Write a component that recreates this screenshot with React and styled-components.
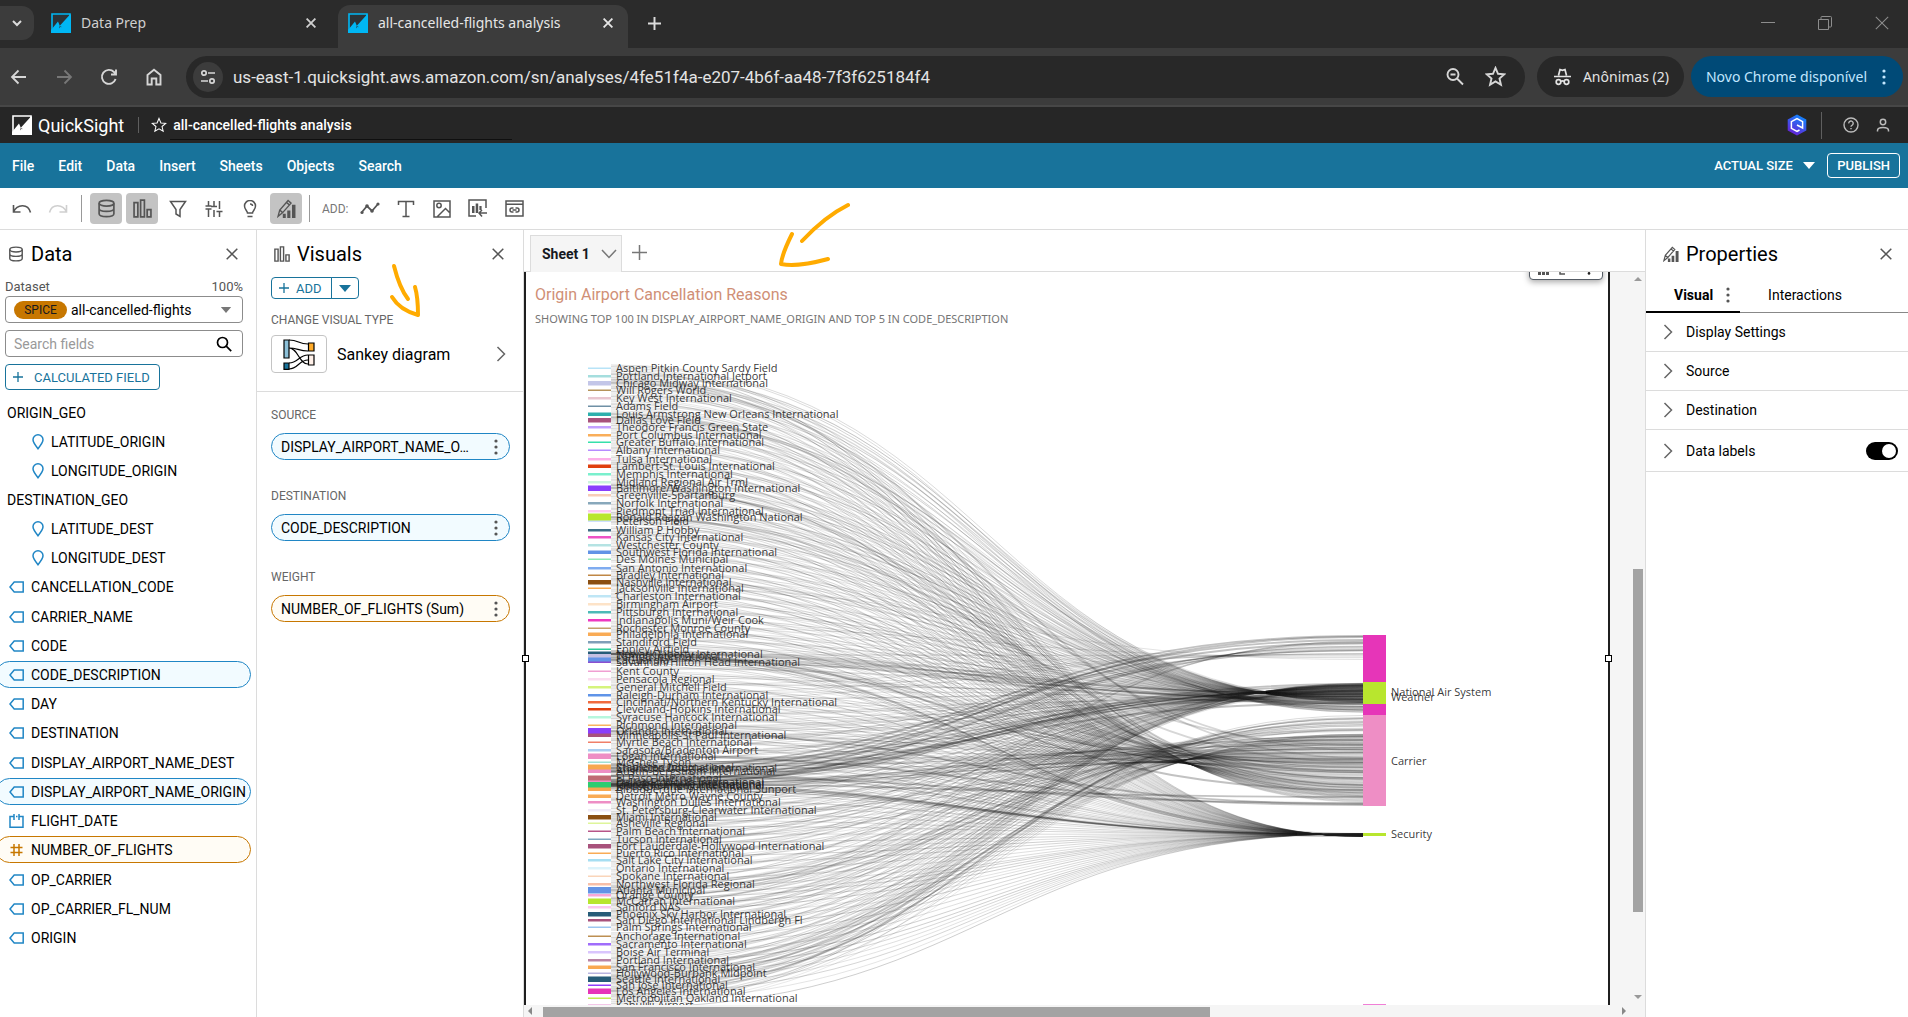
import React from "react";
import styled, { createGlobalStyle, css } from "styled-components";

const appFont = `Roboto, "Open Sans", sans-serif`;
const chromeFont = `"Noto Sans", "Open Sans", sans-serif`;
const chartFont = `"Open Sans", "Noto Sans", sans-serif`;

const GlobalStyle = createGlobalStyle`
  *, *::before, *::after { box-sizing: border-box; }
  body { margin: 0; overflow: hidden; background: #fff; }
  button, input, select { font: inherit; color: inherit; }
  button { background: none; border: 0; padding: 0; cursor: pointer; }
  svg { display: block; flex: none; }
`;

const Page = styled.div`
  display: flex;
  flex-direction: column;
  height: 100vh;
  position: relative;
  font-family: ${appFont};
  font-size: 14px;
  color: #16191f;
`;

/* ---------- browser chrome ---------- */

const TabStrip = styled.div`
  display: flex;
  align-items: flex-start;
  height: 48px;
  background: #2b2b2b;
  color: #dcdcdc;
  font-family: ${chromeFont};
`;

const TabSearch = styled.button`
  display: grid;
  place-items: center;
  width: 34px;
  height: 34px;
  margin-top: 6px;
  background: #3c3c3c;
  border-radius: 0 12px 12px 0;
`;

const BrowserTab = styled.div`
  display: flex;
  align-items: center;
  gap: 10px;
  height: 43px;
  margin-top: 5px;
  padding: ${(p) => (p.$active ? "0 15px 7px 10px" : "0 22px 7px 17px")};
  width: ${(p) => (p.$active ? 290 : 304)}px;
  background: ${(p) => (p.$active ? "#3c3c3c" : "transparent")};
  color: ${(p) => (p.$active ? "#e6e6e6" : "#cfcfcf")};
  border-radius: 12px 12px 0 0;
`;

const TabTitle = styled.span`
  flex: 1;
  white-space: nowrap;
  line-height: 20px;
`;

const NewTab = styled.button`
  display: grid;
  place-items: center;
  width: 34px;
  height: 34px;
  margin: 6px 0 0 9px;
`;

const WindowControls = styled.div`
  display: flex;
  gap: 43px;
  margin: 16px 19px 0 auto;
  color: #8d8d8d;
`;

const AddressBar = styled.div`
  display: flex;
  align-items: center;
  height: 59px;
  padding-right: 5px;
  background: #3c3c3c;
  border-bottom: 2px solid #474747;
  color: #d6d6d6;
  font-family: ${chromeFont};
`;

const NavButtons = styled.div`
  display: flex;
  gap: 23px;
  padding: 0 21px 0 8px;
`;

const UrlBox = styled.div`
  display: flex;
  align-items: center;
  flex: 1;
  height: 42px;
  padding: 0 19px 0 7px;
  background: #282828;
  border-radius: 21px;
`;

const SiteInfo = styled.button`
  display: grid;
  place-items: center;
  width: 30px;
  height: 30px;
  border-radius: 50%;
  background: #3c3c3c;
`;

const UrlInput = styled.input`
  flex: 1;
  min-width: 0;
  border: 0;
  outline: 0;
  padding: 0 10px;
  background: transparent;
  color: #e3e3e3;
  font-family: ${appFont};
  font-size: 17px;
`;

const UrlActions = styled.div`
  display: flex;
  gap: 20px;
`;

const ChromePill = styled.button`
  display: flex;
  align-items: center;
  height: 41px;
  border-radius: 21px;
  background: ${(p) => (p.$accent ? "#004a77" : "#282828")};
  color: ${(p) => (p.$accent ? "#c2e7ff" : "#e3e3e3")};
  margin-left: ${(p) => (p.$accent ? 7 : 12)}px;
  padding: ${(p) => (p.$accent ? "0 17px 0 15px" : "0 15px 0 16px")};
  gap: ${(p) => (p.$accent ? 15 : 11)}px;
  white-space: nowrap;
`;

/* ---------- application header ---------- */

const Header = styled.header`
  display: flex;
  align-items: center;
  height: 36px;
  padding: 0 18px 0 12px;
  background: #262626;
  color: #fff;
`;

const Brand = styled.span`
  margin-left: 6px;
  font-size: 18px;
`;

const HeaderRule = styled.span`
  width: 1px;
  height: ${(p) => p.$h}px;
  margin: ${(p) => p.$m};
  background: #5f5f5f;
`;

const HeaderIcons = styled.div`
  display: flex;
  align-items: center;
  gap: 17px;
  color: #bbb;
`;

const NameInput = styled.input`
  width: 342px;
  height: 25px;
  margin: 5px auto 0 3px;
  padding: 0 3px 5px;
  border: 0;
  border-bottom: 1px solid #0f0f0f;
  background: transparent;
  font-weight: 500;
  outline: 0;
`;

const MenuBar = styled.nav`
  display: flex;
  align-items: center;
  height: 45px;
  padding: 0 8px 0 12px;
  background: #18739b;
  color: #fff;
  font-weight: 500;
`;

const MenuItems = styled.div`
  display: flex;
  gap: 24px;
  margin-right: auto;
`;

const SizePicker = styled.label`
  display: flex;
  align-items: center;
  gap: 10px;
  font-size: 13px;
  margin-right: 12px;
  select {
    appearance: none;
    border: 0;
    padding: 0;
    background: transparent;
    outline: 0;
  }
`;

const Publish = styled.button`
  height: 25px;
  padding: 0 9px;
  border: 1px solid #fff;
  border-radius: 4px;
  font-size: 13px;
  font-weight: 500;
`;

const ToolBar = styled.div`
  display: flex;
  align-items: center;
  gap: 4px;
  height: 42px;
  padding: 0 6px;
  border-bottom: 1px solid #dcdcdc;
  color: #545b64;
`;

const Tool = styled.button`
  display: grid;
  place-items: center;
  width: 32px;
  height: 31px;
  border-radius: 4px;
  background: ${(p) => (p.$on ? "#c3c3c3" : "transparent")};
  color: ${(p) => (p.$faint ? "#cfcfcf" : "#555")};
`;

const ToolRule = styled.span`
  width: 1px;
  height: 27px;
  margin: 0 ${(p) => (p.$tight ? 2 : 4)}px 0 3px;
  background: #999;
`;

const AddLabel = styled.span`
  width: 28px;
  margin-left: 6px;
  font-size: 12px;
  color: #777;
`;

/* ---------- panels ---------- */

const Work = styled.div`
  display: flex;
  flex: 1;
  min-height: 0;
`;

const Panel = styled.section`
  flex: none;
  width: ${(p) => p.$w}px;
  border-${(p) => p.$edge}: 1px solid #dcdcdc;
  overflow: hidden;
`;

const PanelHead = styled.div`
  display: flex;
  align-items: center;
  gap: 7px;
  height: 47px;
  padding: ${(p) => p.$pad};
  color: #555;
  h2 {
    flex: 1;
    margin: 0;
    font-size: 20px;
    font-weight: 400;
    color: #000;
    line-height: 24px;
  }
`;

const DataControls = styled.div`
  display: flex;
  flex-direction: column;
  gap: 7px;
  width: 238px;
  margin-left: 5px;
`;

const DatasetLabel = styled.div`
  display: flex;
  justify-content: space-between;
  height: 12px;
  line-height: 20px;
  color: #555;
  font-size: 13px;
`;

const Box = styled.div`
  display: flex;
  align-items: center;
  height: 27px;
  padding: 0 10px 0 8px;
  border: 1px solid #8c8c8c;
  border-radius: 4px;
  select,
  input {
    flex: 1;
    min-width: 0;
    appearance: none;
    border: 0;
    outline: 0;
    padding: 0;
    background: transparent;
    color: #000;
  }
  input::placeholder {
    color: #999;
    opacity: 1;
  }
`;

const Spice = styled.span`
  width: 53px;
  height: 18px;
  margin-right: 4px;
  border-radius: 9px;
  background: #c77700;
  color: #16191f;
  font-size: 12px;
  line-height: 18px;
  text-align: center;
`;

const Outline = styled.button`
  display: flex;
  align-items: center;
  align-self: flex-start;
  gap: ${(p) => p.$gap}px;
  height: ${(p) => p.$h}px;
  padding: 0 9px 0 7px;
  border: 1px solid #18739b;
  border-radius: ${(p) => p.$r || "4px"};
  color: #18739b;
  font-size: 13px;
  white-space: nowrap;
`;

const Fields = styled.ul`
  display: flex;
  flex-direction: column;
  gap: 2px;
  margin: 0;
  padding: 9px 0 0;
  list-style: none;
  color: #000;
`;

const tones = {
  blue: css`
    border-color: #2086c5;
    background: #f2fbff;
  `,
  orange: css`
    border-color: #c77700;
    background: #fffcf5;
  `,
};

const FieldRow = styled.li`
  display: flex;
  align-items: center;
  gap: 7px;
  height: 27px;
  margin: 0 5px ${(p) => (p.$end ? 1 : 0)}px -4px;
  padding-left: ${(p) => p.$pad}px;
  border: 1px solid transparent;
  border-radius: 14px;
  white-space: nowrap;
  color: #000;
  ${(p) => tones[p.$tone]}
`;

const VisualTop = styled.div`
  padding: 0 14px 18px;
  border-bottom: 1px solid #dcdcdc;
  h3 {
    margin-top: 13px;
  }
`;

const SplitButton = styled.div`
  display: flex;
  button + button {
    margin-left: -1px;
    padding: 0 7px;
  }
`;

const SectionLabel = styled.h3`
  margin: 0;
  font-size: 12px;
  line-height: 16px;
  font-weight: 400;
  color: #666;
`;

const VisualType = styled.button`
  display: flex;
  align-items: center;
  width: 100%;
  margin-top: 7px;
  padding-right: 3px;
  font-size: 16px;
  color: #000;
  text-align: left;
  span {
    flex: 1;
    margin-left: 10px;
  }
`;

const Thumb = styled.i`
  display: grid;
  place-items: center;
  width: 56px;
  height: 38px;
  border: 1px solid #c4c4c4;
  border-radius: 4px;
`;

const Wells = styled.div`
  display: flex;
  flex-direction: column;
  gap: 28px;
  padding: 15px 13px 0 14px;
`;

const WellPill = styled.button`
  display: flex;
  align-items: center;
  justify-content: space-between;
  width: 100%;
  height: 27px;
  margin-top: 10px;
  padding: 0 11px 0 9px;
  border: 1px solid;
  border-radius: 14px;
  ${(p) => tones[p.$tone]}
  span {
    color: #000;
  }
  svg {
    color: #555;
  }
`;

const PropTabs = styled.div`
  display: flex;
  height: 36px;
  border-bottom: 1px solid #888;
`;

const PropTab = styled.button`
  display: flex;
  align-items: center;
  gap: 13px;
  height: 36px;
  padding: 2px 10px 0 28px;
  border-bottom: 2px solid ${(p) => (p.$on ? "#000" : "transparent")};
  font-weight: ${(p) => (p.$on ? 700 : 400)};
  color: #000;
  svg {
    color: #555;
  }
`;

const PropRow = styled.div`
  display: flex;
  align-items: center;
  min-height: ${(p) => (p.$tall ? 42 : 39)}px;
  padding: 0 10px 0 17px;
  border-bottom: 1px solid #dcdcdc;
  button {
    display: flex;
    align-items: center;
    gap: 13px;
    flex: 1;
    color: #000;
  }
`;

const Toggle = styled.input`
  appearance: none;
  width: 32px;
  height: 18px;
  margin: 0;
  padding: 2px;
  border-radius: 9px;
  background: #000;
  &::before {
    content: "";
    display: block;
    width: 14px;
    height: 14px;
    margin-left: auto;
    border-radius: 50%;
    background: #fff;
  }
`;

/* ---------- sheet ---------- */

const Center = styled.main`
  display: flex;
  flex-direction: column;
  flex: 1;
  min-width: 0;
`;

const SheetTabs = styled.div`
  display: flex;
  align-items: flex-end;
  gap: 10px;
  height: 42px;
  padding-left: 6px;
  border-bottom: 1px solid #dcdcdc;
`;

const SheetTab = styled.button`
  display: flex;
  align-items: center;
  gap: 11px;
  height: 37px;
  margin-bottom: -1px;
  padding: 0 4px 0 11px;
  border: 1px solid #dcdcdc;
  border-bottom: 0;
  background: #f5f5f5;
  font-weight: 700;
`;

const AddSheet = styled.button`
  display: grid;
  place-items: center;
  width: 16px;
  height: 37px;
`;

const Stage = styled.div`
  display: grid;
  flex: 1;
  min-height: 0;
  grid-template-columns: 1fr 35px;
  grid-template-rows: 1fr 12px;
  background: #f5f5f5;
`;

const VisualFrame = styled.div`
  position: relative;
  min-width: 0;
  min-height: 0;
`;

const VisualCard = styled.article`
  position: relative;
  height: 100%;
  overflow: hidden;
  padding: 13px 0 0 9px;
  border: solid #1f1f1f;
  border-width: 0 2px;
  background: #fff;
  h1 {
    margin: 0;
    font-size: 16px;
    font-weight: 400;
    line-height: 20px;
    color: #d08f76;
  }
  p {
    margin: 6px 0 13px;
    font-family: ${chromeFont};
    font-size: 11px;
    line-height: 16px;
    color: #757575;
  }
  > svg {
    margin-left: -9px;
  }
`;

const Handle = styled.i`
  position: absolute;
  top: 383px;
  ${(p) => p.$side}: -2px;
  width: 7px;
  height: 7px;
  border: 1px solid #000;
  background: #fff;
`;

const FloatMenu = styled.div`
  position: absolute;
  top: -18px;
  right: 5px;
  display: flex;
  align-items: flex-end;
  gap: 8px;
  width: 74px;
  height: 26px;
  padding: 0 11px 4px 8px;
  border: 1px solid #545b64;
  border-radius: 4px;
  background: #fff;
  box-shadow: 0 2px 6px rgba(0, 0, 0, 0.35);
  color: #555;
  svg:last-child {
    margin-left: auto;
    color: #222;
  }
`;

const VScroll = styled.div`
  display: flex;
  flex-direction: column;
  align-items: center;
  padding: 5px 2px 6px 23px;
`;

const VThumb = styled.div`
  width: 10px;
  height: 343px;
  margin: auto 0 82px;
  background: #a3a3a3;
`;

const HScroll = styled.div`
  display: flex;
  align-items: center;
  grid-column: 1 / -1;
  padding: 0 18px 0 4px;
`;

const HThumb = styled.div`
  width: 667px;
  height: 10px;
  margin: 2px auto 0 10px;
  background: #a3a3a3;
`;

const Ink = styled.svg`
  position: absolute;
  left: 380px;
  top: 195px;
  pointer-events: none;
`;

/* ---------- icons ---------- */

const Icon = ({ w = 16, h, vb, sw = 1.5, children, ...rest }) => (
  <svg width={w} height={h || w} viewBox={vb || `0 0 ${w} ${h || w}`} fill="none" stroke="currentColor" strokeWidth={sw} {...rest}>
    {children}
  </svg>
);

const Close = ({ s = 12, sw = 1.5 }) => (
  <Icon w={s} vb="0 0 12 12" sw={sw}><path d="M.7.7l10.6 10.6M11.3.7L.7 11.3" /></Icon>
);
const Plus = ({ s = 10, sw = 1.3 }) => <Icon w={s} vb="0 0 10 10" sw={sw}><path d="M5 0v10M0 5h10" /></Icon>;
const Dots = ({ h = 16 }) => (
  <Icon w={4} h={h} vb="0 0 4 16" fill="currentColor" stroke="none">
    <circle cx="2" cy="2" r="1.6" /><circle cx="2" cy="8" r="1.6" /><circle cx="2" cy="14" r="1.6" />
  </Icon>
);
const Caret = ({ w = 12 }) => (
  <Icon w={w} h={7} vb="0 0 12 7" stroke="none" fill="currentColor"><path d="M0 0h12L6 7z" /></Icon>
);
const ChevronRight = () => <Icon w={10} h={16} color="#666"><path d="M1.5 1l7 7-7 7" /></Icon>;
const Logo = ({ color, bg }) => (
  <Icon w={20} stroke="none">
    <path d="M1 1h18v18H1z" fill={bg} stroke={color} strokeWidth="1.6" />
    <path d="M0 17L7 8.600l1.800 4.200L19 1.500h1V20H0z" fill={color} />
    <path d="M8.800 12.800L8 15.500l2-2.300.6 1.300" fill={bg} />
  </Icon>
);
const Star = ({ s = 17, sw = 1.5 }) => (
  <Icon w={s} vb="0 0 20 20" sw={sw}>
    <path d="M10 1.800l2.400 5.600 6 .5-4.600 4 1.400 5.900L10 14.700l-5.200 3.100 1.400-5.900-4.600-4 6-.5z" />
  </Icon>
);
const Db = ({ s = 18 }) => (
  <Icon w={s} vb="0 0 18 18" sw={1.6}>
    <ellipse cx="9" cy="4" rx="7" ry="2.700" />
    <path d="M2 4v10c0 3.600 14 3.600 14 0V4M2 9c0 3.600 14 3.600 14 0" />
  </Icon>
);
const Bars = ({ s = 18 }) => (
  <Icon w={s} vb="0 0 18 18" sw={1.6}>
    <path d="M1 3.500h3.600V17H1zM7.200 1h3.600v16H7.200zM13.400 10H17v7h-3.600z" />
  </Icon>
);
const PencilBars = ({ s = 18 }) => (
  <Icon w={s} vb="0 0 18 18" sw={1.3}>
    <path d="M1 16.500l1.600-6L10.500 1.500l2.800 2.400-7.900 9zM9 3.200l2.800 2.400M2.600 10.500l2.800 2.400" />
    <path d="M5.500 14h2.800v4H5.500zM9.700 11h3v7h-3zM14.200 5.500H17.500V18h-3.300z" fill="currentColor" stroke="none" />
  </Icon>
);
const Pin = () => <Icon w={12} h={16} color="#2086c5" sw={1.5}><path d="M6 14.700C3 11 1 8.500 1 5.800a5 5 0 0110 0C11 8.500 9 11 6 14.700z" /></Icon>;
const Tag = () => <Icon w={15} h={12} color="#2086c5"><path d="M5.200 1h9v10h-9L1 6z" /></Icon>;
const DateIcon = () => <Icon w={15} h={14} color="#2086c5"><path d="M4.500 2.500H1v10.700h13V2.500h-3.500M7 2.500h1.500M5 0v6M10 0v6" /></Icon>;
const Hash = () => <Icon w={15} h={12} color="#c77700"><path d="M5 0v12M10 0v12M1.500 3.500h12M1.500 8.500h12" /></Icon>;
const Mini = ({ d }) => (
  <Icon w={8} h={5} vb="0 0 8 5" stroke="none" fill="#999"><path d={d} /></Icon>
);

/* ---------- Sankey data: name, centre, node height, colour ---------- */

const AIRPORTS = [
  ["Aspen Pitkin County Sardy Field", 368, 1, "#b7e3f7"], ["Portland International Jetport", 376, 2, "#a5dede"],
  ["Chicago Midway International", 383, 4, "#c3c6e8"], ["Will Rogers World", 390, 1, "#b5935a"],
  ["Key West International", 398, 2, "#e8c6d0"], ["Adams Field", 406, 1, "#6f90a5"],
  ["Louis Armstrong New Orleans International", 414, 3, "#2db0ad"], ["Dallas Love Field", 420, 4, "#a8527c"],
  ["Theodore Francis Green State", 427, 2, "#c3a1ff"], ["Port Columbus International", 435, 2, "#f9ae5a"],
  ["Greater Buffalo International", 442, 1, "#35e0aa"], ["Albany International", 450, 1, "#b68cff"],
  ["Tulsa International", 459, 2, "#fbb0e8"], ["Lambert-St. Louis International", 466, 3, "#e0400f"],
  ["Memphis International", 474, 2, "#7af0cd"], ["Midland Regional Air Trml", 482, 2, "#cdf5dd"],
  ["Baltimore/Washington International", 488, 5, "#8a3ffc"], ["Greenville-Spartanburg", 495, 2, "#f8cdb8"],
  ["Norfolk International", 503, 2, "#88a8bb"], ["Piedmont Triad International", 511, 2, "#fbc8f2"],
  ["Ronald Reagan Washington National", 517, 7, "#b8e62e"], ["Peterson Field", 521, 1, "#cfe0ff"],
  ["William P Hobby", 530, 2, "#3f6d86"], ["Kansas City International", 537, 2, "#ee52c4"],
  ["Westchester County", 545, 2, "#b5e3e3"], ["Southwest Florida International", 552, 3, "#6293e6"],
  ["Des Moines Municipal", 559, 1, "#8fe8b5"], ["San Antonio International", 568, 2, "#7facf0"],
  ["Bradley International", 575, 1, "#c08745"], ["Nashville International", 582, 4, "#8b4f12"],
  ["Jacksonville International", 588, 1, "#f9ab55"], ["Charleston International", 596, 2, "#bfe6f5"],
  ["Birmingham Airport", 604, 2, "#fde3c8"], ["Pittsburgh International", 612, 2, "#4cbab7"],
  ["Indianapolis Muni/Weir Cook", 620, 2, "#ee38c0"], ["Rochester Monroe County", 628, 1, "#c5a06a"],
  ["Philadelphia International", 634, 3, "#f9ab55"], ["Standiford Field", 642, 2, "#7f9fb8"],
  ["Eppley Airfield", 649, 1, "#2ecc9a"], ["Newark Liberty International", 654, 5, "#265c78"],
  ["Tampa International", 656, 4, "#c5c0e2"], ["LaGuardia", 660, 5, "#6293e6"],
  ["Savannah/Hilton Head International", 662, 1, "#8a4fd0"], ["Kent County", 671, 1, "#f09fd2"],
  ["Pensacola Regional", 679, 2, "#fbdcf0"], ["General Mitchell Field", 687, 2, "#d5f47c"],
  ["Raleigh-Durham International", 695, 2, "#5f94e8"], ["Cincinnati/Northern Kentucky International", 702, 2, "#f06a3e"],
  ["Cleveland-Hopkins International", 709, 2, "#e0400f"], ["Syracuse Hancock International", 717, 2, "#b6f7dd"],
  ["Richmond International", 725, 1, "#f9b35f"], ["Orlando International", 731, 6, "#8a3ffc"],
  ["Minneapolis-St Paul International", 735, 3, "#a8527c"], ["Myrtle Beach International", 742, 1, "#f07f68"],
  ["Sarasota/Bradenton Airport", 750, 2, "#a9cdf0"], ["Logan International", 756, 5, "#ee8ec5"],
  ["McGhee Tyson", 762, 1, "#a0e0d5"], ["Stapleton International", 767, 5, "#f8a850"],
  ["Charlotte Douglas International", 768, 5, "#f8a850"], ["Austin-Bergstrom International", 771, 3, "#ee8ec5"],
  ["El Paso International", 778, 5, "#c06a74"], ["Dallas-Ft Worth International", 782, 3, "#ee8ec5"],
  ["Chicago O'Hare International", 784, 4, "#2ecc71"], ["John F Kennedy International", 785, 6, "#2ecc71"],
  ["Houston Intercontinental", 786, 4, "#2ecc71"], ["Albuquerque International Sunport", 789, 3, "#f8a850"],
  ["Detroit Metro Wayne County", 796, 3, "#f9ab55"], ["Washington Dulles International", 802, 2, "#ee8ec5"],
  ["St. Petersburg-Clearwater International", 810, 2, "#efeaf8"], ["Miami International", 817, 4, "#8b4f12"],
  ["Asheville Regional", 823, 1, "#def59a"], ["Palm Beach International", 831, 1, "#b85588"],
  ["Tucson International", 839, 1, "#7fa8c0"], ["Fort Lauderdale-Hollywood International", 846, 4, "#a8527c"],
  ["Puerto Rico International", 853, 1, "#f9ab55"], ["Salt Lake City International", 860, 2, "#a6def2"],
  ["Ontario International", 868, 2, "#dcf3fb"], ["Spokane International", 876, 1, "#fad5ba"],
  ["Northwest Florida Regional", 884, 2, "#f7bfa8"], ["Atlanta Municipal", 890, 6, "#6293e6"],
  ["Orange County", 895, 2, "#f8a8d8"], ["McCarran International", 901, 5, "#b8e62e"],
  ["Sanford NAS", 907, 2, "#fbc8ee"], ["Phoenix Sky Harbor International", 914, 4, "#265c78"],
  ["San Diego International Lindbergh Fl", 920, 2, "#a8527c"], ["Palm Springs International", 927, 1, "#9cc6f0"],
  ["Anchorage International", 936, 1, "#bd8f52"], ["Sacramento International", 944, 2, "#a06dfb"],
  ["Boise Air Terminal", 952, 2, "#d9c5fd"], ["Portland International", 960, 2, "#b983a4"],
  ["San Francisco International", 967, 3, "#f9a850"], ["Hollywood-Burbank Midpoint", 973, 1, "#b9b5e0"],
  ["Seattle International", 979, 5, "#265c78"], ["San Jose International", 985, 1, "#8f3ffb"],
  ["Los Angeles International", 991, 5, "#e635b8"], ["Metropolitan Oakland International", 998, 1, "#c0ec50"],
  ["Kahului Airport", 1005, 1, "#e88ed0"],
];

const REASONS = [
  { y: 635, h: 80, c: "#e635b8" },
  { y: 682, h: 22, c: "#b8e62e" },
  { y: 715, h: 91, c: "#ee8ec5" },
  { y: 833, h: 3, c: "#b8e62e" },
  { y: 1004, h: 2, c: "#f07fd6" },
];
const REASON_LABELS = [["National Air System", 692], ["Weather", 697], ["Carrier", 761], ["Security", 834]];

const X0 = 611;
const X1 = 1363;
const XM = (X0 + X1) / 2;
const curve = (a, b) => `M${X0} ${a.toFixed(1)}C${XM} ${a.toFixed(1)} ${XM} ${b.toFixed(1)} ${X1} ${b.toFixed(1)}`;
const noise = (i) => { const v = Math.sin(i * 127.1 + 11.7) * 43758.5453; return v - Math.floor(v); };

const links = [];
AIRPORTS.forEach(([, y, h], i) => {
  const r = 1 - i / AIRPORTS.length;
  const w = h > 3 ? 1.3 : 1;
  const spread = Math.max(h, 5);
  const from = (k) => y + (k - 2) * spread * 0.3;
  const o = (k) => 0.09 + noise(i * 7 + k) * 0.1;
  links.push([from(0), 683 + r * 19, w, o(0)]);
  links.push([from(1), noise(i) < 0.28 && r < 0.7 ? 636 + r * 34 : 684 + r * 24 + noise(i + 5) * 5, w, o(1)]);
  links.push([from(2), 720 + r * 76 + (noise(i + 40) - 0.5) * 16, w, o(2)]);
  links.push([from(3), 734 + r * 68, 1, o(3)]);
  if (i % 2) links.push([from(0.5), 684 + r * 16, 1, 0.1]);
  links.push([from(4), 833.5 + r * 3, 1, o(4) + 0.03]);
});
[[768, 636], [772, 640], [776, 643], [782, 637], [786, 650], [780, 684], [784, 686], [771, 703], [654, 700], [660, 703],
  [731, 804], [756, 805], [776, 803], [784, 797], [654, 790], [383, 758], [414, 750], [488, 762], [517, 745],
  [785, 740], [890, 730], [979, 722], [991, 718], [967, 735], [784, 836], [654, 834], [786, 835]]
  .forEach(([a, b]) => links.push([a, b, 1.8, a > 640 && a < 790 ? 0.27 : 0.18]));

function Sankey() {
  return (
    <svg width="1082" height="680" viewBox="526 340 1082 680" role="img" aria-label="Origin airport to cancellation reason">
      <g fill="none" stroke="#1f1f1f">
        {links.map(([a, b, w, o], i) => <path key={i} d={curve(a, b)} strokeWidth={w} strokeOpacity={o} />)}
      </g>
      {AIRPORTS.map(([n, y, h, c]) => <rect key={n} x="588" y={y - h / 2} width="23" height={h + 0.5} fill={c} />)}
      {REASONS.map((r) => <rect key={r.y} x="1363" y={r.y} width="23" height={r.h} fill={r.c} />)}
      <g fill="#222" fillOpacity="0.9" fontFamily={chartFont} fontSize="11">
        {AIRPORTS.map(([n, y]) => <text key={n} x="616" y={y + 4}>{n}</text>)}
        {REASON_LABELS.map(([n, y]) => <text key={n} x="1391" y={y + 4}>{n}</text>)}
      </g>
    </svg>
  );
}

const FIELDS = [
  ["ORIGIN_GEO"], ["LATITUDE_ORIGIN", "pin"], ["LONGITUDE_ORIGIN", "pin"],
  ["DESTINATION_GEO"], ["LATITUDE_DEST", "pin"], ["LONGITUDE_DEST", "pin"],
  ["CANCELLATION_CODE", "tag", null, true], ["CARRIER_NAME", "tag"], ["CODE", "tag"], ["CODE_DESCRIPTION", "tag", "blue"],
  ["DAY", "tag"], ["DESTINATION", "tag", null, true], ["DISPLAY_AIRPORT_NAME_DEST", "tag"],
  ["DISPLAY_AIRPORT_NAME_ORIGIN", "tag", "blue"], ["FLIGHT_DATE", "date"], ["NUMBER_OF_FLIGHTS", "hash", "orange", true],
  ["OP_CARRIER", "tag"], ["OP_CARRIER_FL_NUM", "tag"], ["ORIGIN", "tag"],
];
const FIELD_ICON = { pin: Pin, tag: Tag, date: DateIcon, hash: Hash };
const FIELD_PAD = { pin: 35, tag: 12, date: 12, hash: 12 };

const WELLS = [
  ["SOURCE", "DISPLAY_AIRPORT_NAME_O…", "blue"],
  ["DESTINATION", "CODE_DESCRIPTION", "blue"],
  ["WEIGHT", "NUMBER_OF_FLIGHTS (Sum)", "orange"],
];

export default function App() {
  return (
    <Page>
      <GlobalStyle />
      <TabStrip>
        <TabSearch aria-label="Search tabs"><Icon w={10} h={7} sw={2}><path d="M1 1l4 4 4-4" /></Icon></TabSearch>
        <BrowserTab>
          <Logo color="#00b7f4" bg="#2b3338" /><TabTitle>Data Prep</TabTitle>
          <button aria-label="Close tab"><Close s={10} sw={2.2} /></button>
        </BrowserTab>
        <BrowserTab $active>
          <Logo color="#00b7f4" bg="#2b3338" /><TabTitle>all-cancelled-flights analysis</TabTitle>
          <button aria-label="Close tab"><Close s={10} sw={2.2} /></button>
        </BrowserTab>
        <NewTab aria-label="New tab"><Plus s={13} sw={1.5} /></NewTab>
        <WindowControls>
          <button aria-label="Minimize"><Icon w={14} sw={1}><path d="M0 6.500h14" /></Icon></button>
          <button aria-label="Restore"><Icon w={14} sw={1}><path d="M.5 3.500h10v10H.5zM3 3.500V1.500a1 1 0 011-1h8.500a1 1 0 011 1V10a1 1 0 01-1 1h-2" /></Icon></button>
          <button aria-label="Close"><Close s={14} sw={0.9} /></button>
        </WindowControls>
      </TabStrip>
      <AddressBar>
        <NavButtons>
          <button aria-label="Back"><Icon w={22} sw={1.8}><path d="M18 11H4M10.500 4.500L4 11l6.500 6.500" /></Icon></button>
          <button aria-label="Forward"><Icon w={22} sw={1.8} color="#777"><path d="M4 11h14M11.500 4.500L18 11l-6.500 6.500" /></Icon></button>
          <button aria-label="Reload"><Icon w={22} sw={1.9}><path d="M17.600 13A7 7 0 1116 6l2 2.200M18 3.500v5h-5" /></Icon></button>
          <button aria-label="Home"><Icon w={22} sw={1.9}><path d="M4.500 9L11 3.800 17.500 9v9.500h-4.200v-6H8.700v6H4.500z" /></Icon></button>
        </NavButtons>
        <UrlBox>
          <SiteInfo aria-label="Site information">
            <Icon w={16} sw={1.7}><circle cx="4" cy="4" r="2.200" /><path d="M8 4h7M1 12h7" /><circle cx="12" cy="12" r="2.200" /></Icon>
          </SiteInfo>
          <UrlInput aria-label="Address" defaultValue="us-east-1.quicksight.aws.amazon.com/sn/analyses/4fe51f4a-e207-4b6f-aa48-7f3f625184f4" />
          <UrlActions>
            <button aria-label="Zoom out"><Icon w={20} sw={1.9}><circle cx="8" cy="7.500" r="5.500" /><path d="M12 11.500l6 6M5.500 7.500h5" /></Icon></button>
            <button aria-label="Bookmark"><Star s={21} sw={1.8} /></button>
          </UrlActions>
        </UrlBox>
        <ChromePill>
          <Icon w={19} h={18} sw={1.700}><path d="M5.500 7.500L7 1.500l2.500.8 2.500-.8 1.500 6M1 8.500h17M8 13.500c1-.7 2-.7 3 0" /><circle cx="5.500" cy="14" r="2.300" /><circle cx="13.500" cy="14" r="2.300" /></Icon>
          Anônimas (2)
        </ChromePill>
        <ChromePill $accent>Novo Chrome disponível <Dots h={18} /></ChromePill>
      </AddressBar>

      <Header>
        <Logo color="#fff" bg="#262626" />
        <Brand>QuickSight</Brand>
        <HeaderRule $h={16} $m="0 12px 0 14px" />
        <Star s={16} sw={1.3} />
        <NameInput aria-label="Analysis name" defaultValue="all-cancelled-flights analysis" />
        <svg width="20" height="22" viewBox="0 0 20 22">
          <defs><linearGradient id="q" x1="0.800" y1="0" x2="0.300" y2="1"><stop offset="0" stopColor="#0a8cff" /><stop offset="1" stopColor="#6a1fd6" /></linearGradient></defs>
          <path d="M10 .5l9.300 5v11l-9.300 5-9.300-5v-11z" fill="url(#q)" />
          <path d="M12.500 16L10 17.500l-5.600-3.200V7.700L10 4.500l5.600 3.200v6.300L10 11" fill="none" stroke="#fff" strokeWidth="1.500" />
        </svg>
        <HeaderRule $h={27} $m="0 21px 0 14px" />
        <HeaderIcons>
          <Icon w={16} sw={1.4}><circle cx="8" cy="8" r="7" /><path d="M5.800 6.400a2.200 2.200 0 114 1.100C9.300 8.300 8 8.500 8 9.800M8 11v1.300" /></Icon>
          <Icon w={14} sw={1.500}><circle cx="7" cy="4" r="2.700" /><path d="M1.500 13.500v-1c0-4 11-4 11 0v1" /></Icon>
        </HeaderIcons>
      </Header>

      <MenuBar>
        <MenuItems>
          {["File", "Edit", "Data", "Insert", "Sheets", "Objects", "Search"].map((m) => <button key={m}>{m}</button>)}
        </MenuItems>
        <SizePicker>
          <select aria-label="Zoom level"><option>ACTUAL SIZE</option></select>
          <Caret />
        </SizePicker>
        <Publish>PUBLISH</Publish>
      </MenuBar>

      <ToolBar>
        <Tool aria-label="Undo"><Icon w={20} sw={1.600}><path d="M1.500 6v7h7M1.500 13C5 5 16 4 18.500 13.500" /></Icon></Tool>
        <Tool aria-label="Redo" $faint><Icon w={20} sw={1.600}><path d="M18.500 6v7h-7M18.500 13C15 5 4 4 1.500 13.500" /></Icon></Tool>
        <ToolRule />
        <Tool aria-label="Data" $on><Db s={19} /></Tool>
        <Tool aria-label="Visuals" $on><Bars s={19} /></Tool>
        <Tool aria-label="Filter"><Icon w={18}><path d="M1.500 1.500h15L11 9.500v7l-4-2.500V9.500z" /></Icon></Tool>
        <Tool aria-label="Parameters"><Icon w={18} sw={1.500}><path d="M3.500 1v5M3.500 9v8M9 1v6M9 10v7M14.500 1v8M14.500 12v5M.5 9h6M6 6.500h6M11.500 11.500h6M.5 6h6" /></Icon></Tool>
        <Tool aria-label="Insights"><Icon w={18}><path d="M6.500 13c0-2-3-3.500-3-7a5.500 5.500 0 0111 0c0 3.500-3 5-3 7zM6.500 16.500h5M9 4c1.500 0 2.500 1 2.500 2" /></Icon></Tool>
        <Tool aria-label="Properties" $on><PencilBars s={19} /></Tool>
        <ToolRule $tight />
        <AddLabel>ADD:</AddLabel>
        <Tool aria-label="Add visual"><Icon w={20} sw={1.800}><path d="M2 13l5-6 5 5 6-7" /><g fill="currentColor" stroke="none"><circle cx="2" cy="13.500" r="1.600" /><circle cx="7" cy="7" r="1.800" /><circle cx="12" cy="12" r="1.800" /><circle cx="18" cy="5" r="1.600" /></g></Icon></Tool>
        <Tool aria-label="Add text"><Icon w={18}><path d="M1.500 5V1.500h15V5M9 1.500v15M5.500 16.500h7" /></Icon></Tool>
        <Tool aria-label="Add image"><Icon w={18}><path d="M1 1h16v16H1zM4.500 16.500L12.500 8.500l4 4" /><circle cx="6" cy="5.500" r="2.200" /></Icon></Tool>
        <Tool aria-label="Add insight"><Icon w={20} h={19}><path d="M18 9V1H1v16h7M11 14h8M14 11l-3 3 3 3.500" /><path d="M4 7h2.500v7H4zM7.700 4.500h2.500V14H7.700zM11.400 7h2.200v4h-2.200z" fill="currentColor" stroke="none" /></Icon></Tool>
        <Tool aria-label="Embed content"><Icon w={19} h={17} sw={1.500}><path d="M1 1h17v15H1zM1 4.200h17M8.500 12H7a2 2 0 010-4h1.500M10.500 8H12a2 2 0 010 4h-1.500M7.500 10h4" /></Icon></Tool>
      </ToolBar>

      <Work>
        <Panel $w={257} $edge="right" aria-label="Data">
          <PanelHead $pad="0 18px 0 8px">
            <Db s={16} /><h2>Data</h2>
            <button aria-label="Close data"><Close /></button>
          </PanelHead>
          <DataControls>
            <DatasetLabel><label htmlFor="dataset">Dataset</label><span>100%</span></DatasetLabel>
            <Box>
              <Spice>SPICE</Spice>
              <select id="dataset"><option>all-cancelled-flights</option></select>
              <Icon w={12} h={6} vb="0 0 12 7" stroke="none" fill="#777"><path d="M0 0h12L6 7z" /></Icon>
            </Box>
            <Box>
              <input aria-label="Search fields" placeholder="Search fields" />
              <Icon w={16} color="#000" sw={1.700}><circle cx="6.500" cy="6.500" r="5" /><path d="M10.200 10.200l5 5" /></Icon>
            </Box>
            <Outline $gap={11} $h={26}><Plus /> CALCULATED FIELD</Outline>
          </DataControls>
          <Fields>
            {FIELDS.map(([name, kind, tone, end]) => {
              const Glyph = FIELD_ICON[kind];
              return (
                <FieldRow key={name} $tone={tone} $end={end} $pad={kind ? FIELD_PAD[kind] : 10}>
                  {Glyph && <Glyph />}{name}
                </FieldRow>
              );
            })}
          </Fields>
        </Panel>

        <Panel $w={267} $edge="right" aria-label="Visuals">
          <PanelHead $pad="0 19px 0 17px">
            <Bars s={16} /><h2>Visuals</h2>
            <button aria-label="Close visuals"><Close /></button>
          </PanelHead>
          <VisualTop>
            <SplitButton>
              <Outline $gap={7} $h={22} $r="4px 0 0 4px"><Plus /> ADD</Outline>
              <Outline $h={22} $r="0 4px 4px 0" aria-label="More add options"><Caret w={12} /></Outline>
            </SplitButton>
            <SectionLabel>CHANGE VISUAL TYPE</SectionLabel>
            <VisualType>
              <Thumb>
                <svg width="32" height="31" viewBox="0 0 32 31" fill="none" stroke="#000" strokeWidth="1.200">
                  <path d="M6 1c10 0 9 4 19 4M6 9c8 0 10 3 19 3M6 9c9 0 10 16 19 16M6 24c9 0 10-8 19-8M6 30c9 0 10-9 19-9" />
                  <path d="M1 1h5v18H1z" fill="#8cc0d8" /><path d="M1 24h5v6.300H1z" fill="#18739b" />
                  <path d="M25.500 4h5.500v8h-5.500z" fill="#ffab29" /><path d="M25.500 16h5.500v10h-5.500z" fill="#fff0e8" />
                </svg>
              </Thumb>
              <span>Sankey diagram</span>
              <ChevronRight />
            </VisualType>
          </VisualTop>
          <Wells>
            {WELLS.map(([label, value, tone]) => (
              <div key={label}>
                <SectionLabel>{label}</SectionLabel>
                <WellPill $tone={tone}><span>{value}</span><Dots /></WellPill>
              </div>
            ))}
          </Wells>
        </Panel>

        <Center>
          <SheetTabs>
            <SheetTab>Sheet 1 <Icon w={16} h={10} color="#777"><path d="M1 1l7 7.500L15 1" /></Icon></SheetTab>
            <AddSheet aria-label="Add sheet"><Icon w={15} color="#777"><path d="M7.500 0v15M0 7.500h15" /></Icon></AddSheet>
          </SheetTabs>
          <Stage>
            <VisualFrame>
              <VisualCard>
                <h1>Origin Airport Cancellation Reasons</h1>
                <p>SHOWING TOP 100 IN DISPLAY_AIRPORT_NAME_ORIGIN AND TOP 5 IN CODE_DESCRIPTION</p>
                <Sankey />
                <FloatMenu>
                  <Icon w={11} h={11} stroke="none" fill="currentColor"><path d="M0 5h3v6H0zM4 2h3v9H4zM8 4h3v7H8z" /></Icon>
                  <Icon w={9} h={10} vb="0 0 9 10"><path d="M3 3L8 1M3 3v6h5" /></Icon>
                  <Dots h={13} />
                </FloatMenu>
              </VisualCard>
              <Handle $side="left" />
              <Handle $side="right" />
            </VisualFrame>
            <VScroll>
              <Mini d="M0 4h8L4 0z" /><VThumb /><Mini d="M0 1h8L4 5z" />
            </VScroll>
            <HScroll>
              <Icon w={5} h={8} stroke="none" fill="#888"><path d="M4 0v8L0 4z" /></Icon>
              <HThumb />
              <Icon w={5} h={8} stroke="none" fill="#888"><path d="M0 0v8l4-4z" /></Icon>
            </HScroll>
          </Stage>
        </Center>

        <Panel $w={263} $edge="left" aria-label="Properties">
          <PanelHead $pad="0 16px 0 17px">
            <PencilBars s={16} /><h2>Properties</h2>
            <button aria-label="Close properties"><Close /></button>
          </PanelHead>
          <PropTabs>
            <PropTab $on>Visual <Dots /></PropTab>
            <PropTab>Interactions</PropTab>
          </PropTabs>
          {["Display Settings", "Source", "Destination"].map((t) => (
            <PropRow key={t}><button><ChevronRight />{t}</button></PropRow>
          ))}
          <PropRow $tall>
            <button><ChevronRight />Data labels</button>
            <Toggle type="checkbox" defaultChecked aria-label="Data labels" />
          </PropRow>
        </Panel>
      </Work>

      <Ink width="480" height="130" viewBox="380 195 480 130" fill="none" stroke="#ffab00" strokeWidth="4" strokeLinecap="round" strokeLinejoin="round" aria-hidden="true">
        <path d="M394 266c3 12 7 24 14 33M392 297c6 10 15 15 26 18 0-10 0-18-3-28" />
        <path d="M848 205c-18 9-32 21-46 36M792 234c-5 10-10 20-11 30 15 3 32-1 47-5" />
      </Ink>
    </Page>
  );
}
